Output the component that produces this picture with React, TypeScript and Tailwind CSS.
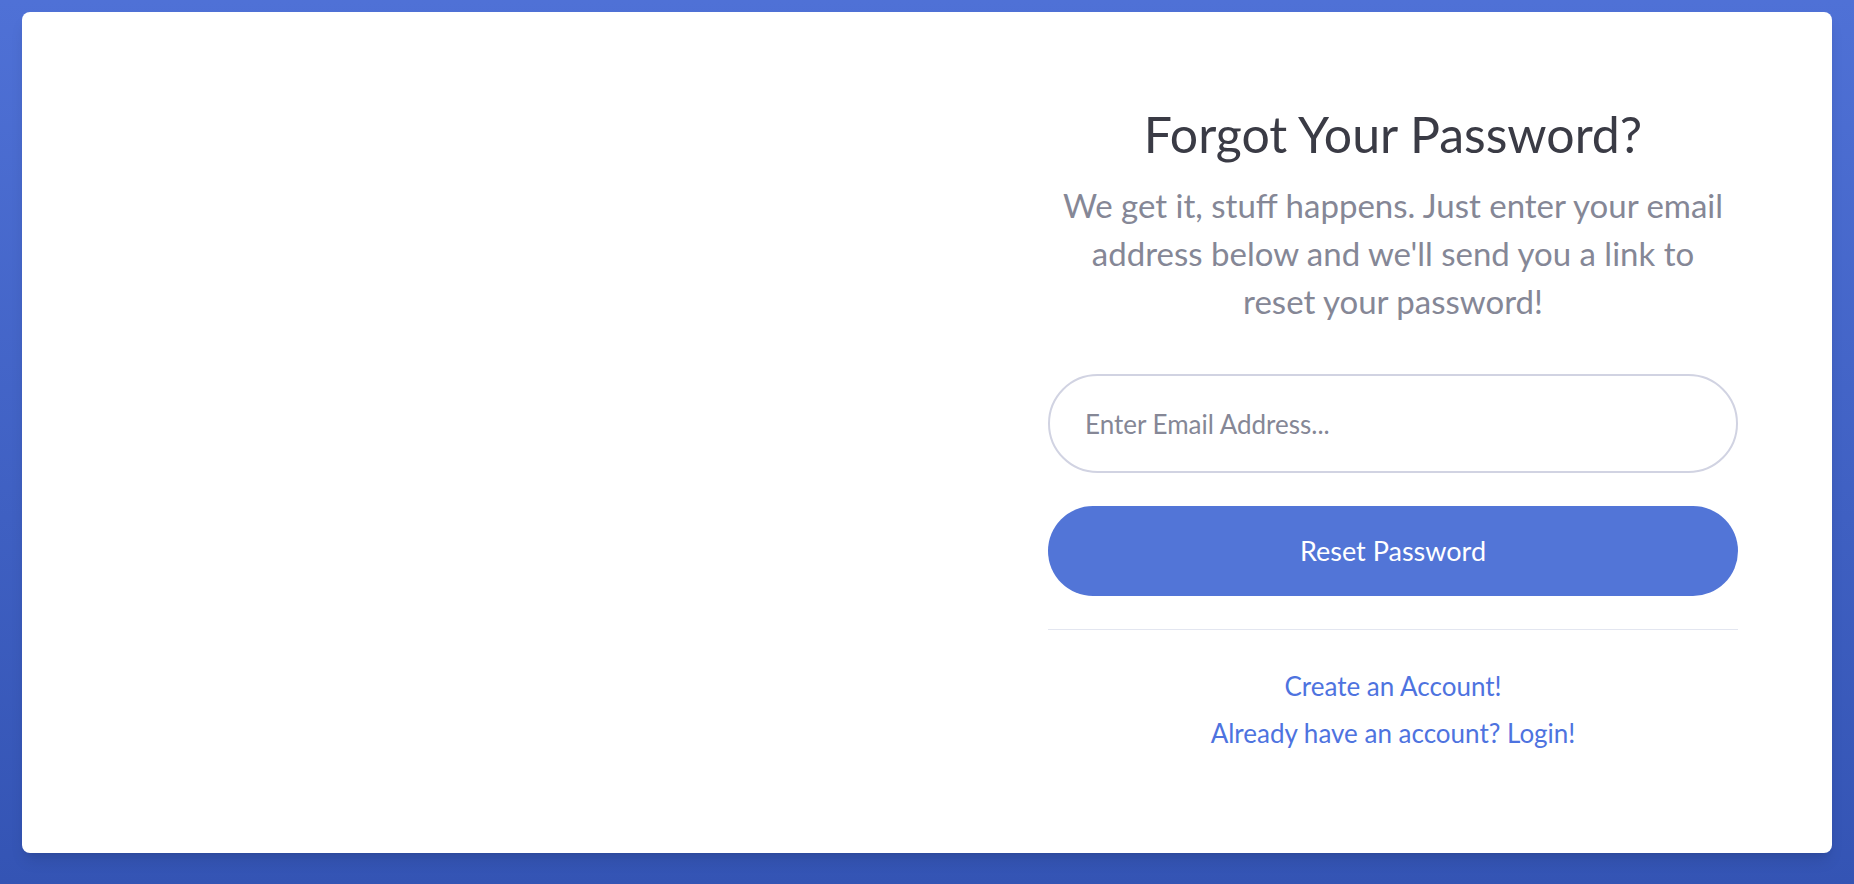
export default function App() {
  return (
    <div className="min-h-screen bg-gradient-to-b from-[#4f71d6] to-[#3454b4] px-[22px] pt-[12px] pb-[31px] font-['Lato',sans-serif]">
      <div className="grid grid-cols-2 h-[841px] rounded-[8px] bg-white shadow-lg overflow-hidden">
        {/* image column (empty) */}
        <div />

        <div className="pl-[121px] pr-[94px] pt-[92px]">
          <h1 className="text-center text-[50px] leading-[1.2] text-[#3a3b45]">Forgot Your Password?</h1>
          <p className="mt-[17px] text-center text-[33px] leading-[48px] text-[#858796]">
            We get it, stuff happens. Just enter your email
            <br />
            address below and we'll send you a link to
            <br />
            reset your password!
          </p>

          <form className="mt-[49px]" onSubmit={(e) => e.preventDefault()}>
            <input
              type="email"
              placeholder="Enter Email Address..."
              className="block w-full h-[99px] rounded-full border-2 border-[#d1d3e2] px-[35px] text-[26px] text-[#6e707e] placeholder:text-[#858796] outline-none"
            />
            <button
              type="submit"
              className="mt-[33px] block w-full h-[90px] rounded-full bg-[#5275d7] text-[27px] text-white"
            >
              Reset Password
            </button>
          </form>

          <hr className="mt-[33px] border-t border-[#e3e6f0]" />

          <div className="mt-[33px] text-center text-[26px] leading-[47px]">
            <div>
              <a href="#" className="text-[#4e73df]">Create an Account!</a>
            </div>
            <div>
              <a href="#" className="text-[#4e73df]">Already have an account? Login!</a>
            </div>
          </div>
        </div>
      </div>
    </div>
  );
}
